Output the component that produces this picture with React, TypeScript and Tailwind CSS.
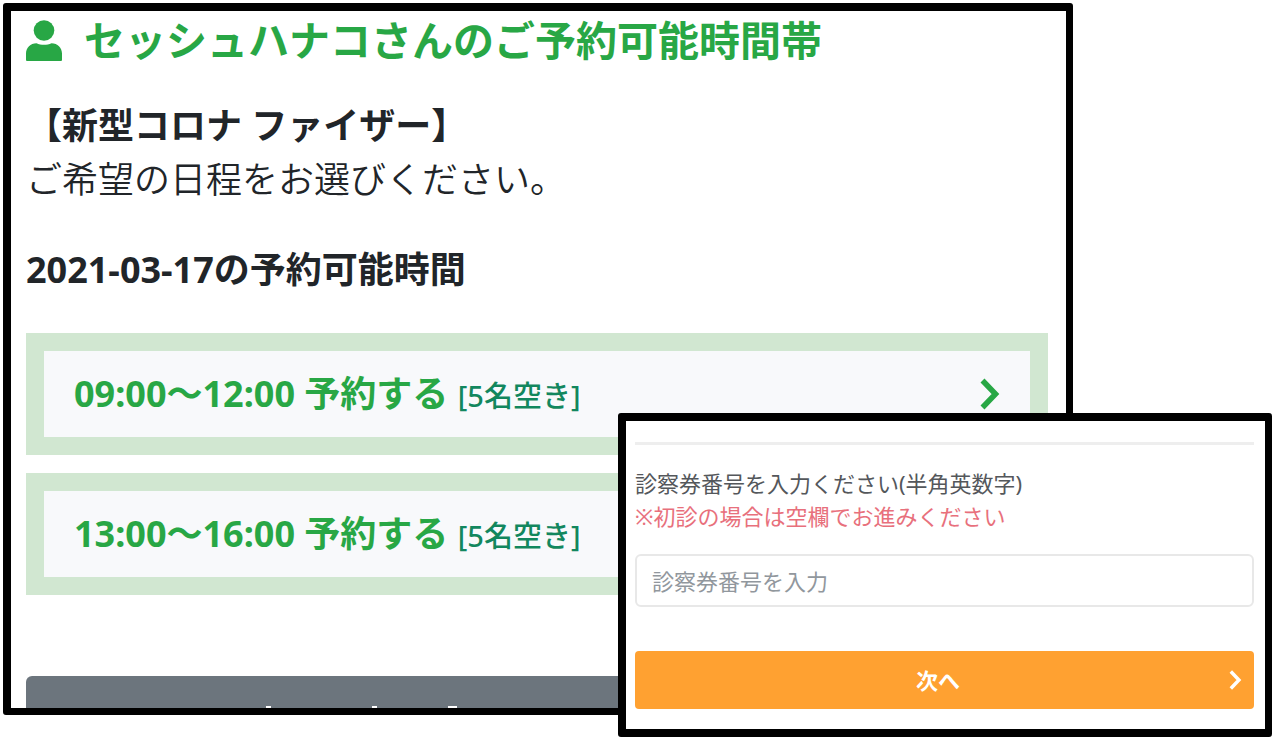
import { useState } from "react";

const slots = [
    { time: "09:00〜12:00", vacancy: 5 },
    { time: "13:00〜16:00", vacancy: 5 },
];

function UserIcon({ className }: { className: string }) {
    return (
        <svg className={className} viewBox="0 0 36 41" fill="currentColor" aria-hidden="true">
            <circle cx="18" cy="10.5" r="10.3" />
            <path d="M10.5 23.2C15 25.2 21 25.2 25.5 23.2C31.5 23.2 36 27.5 36 33.5V40Q36 41 35 41H1Q0 41 0 40V33.5C0 27.5 4.500 23.2 10.500 23.2Z" />
        </svg>
    );
}

function ChevronIcon({ className }: { className: string }) {
    return (
        <svg className={className} viewBox="0 0 20 32" fill="none" stroke="currentColor" strokeWidth="5.500" aria-hidden="true">
            <path d="M2.500 2.500L15.500 16L2.500 29.500" />
        </svg>
    );
}

function SlotButton({ time, vacancy }: { time: string; vacancy: number }) {
    return (
        <button
            type="button"
            className="flex w-full items-center justify-between border-[18px] border-[#d1e7d1] bg-[#f8f9fb] py-4 pr-[30px] pl-[30px] text-left"
        >
            <span className="text-4xl leading-[54px] font-bold text-[#28a745]">
                {time} 予約する{" "}
                <span className="text-[29px] leading-none font-medium text-[#12875e]">[{vacancy}名空き]</span>
            </span>
            <ChevronIcon className="h-8 w-5 flex-none text-[#28a745]" />
        </button>
    );
}

function Schedule() {
    return (
        <main className="mt-[3px] mr-[201px] ml-[3px] rounded-[3px] border-8 border-r-7 border-b-7 border-black bg-white pr-[18px] pl-[15px]">
            <h1 className="flex items-center gap-[22px] text-[41px] leading-[58px] font-bold whitespace-nowrap text-[#28a745]">
                <UserIcon className="h-[41px] w-9 flex-none" />
                セッシュハナコさんのご予約可能時間帯
            </h1>
            <div className="mt-[30px] text-4xl leading-[54px] text-[#212529]">
                <p className="font-bold">【新型コロナ ファイザー】</p>
                <p className="font-[350]">ご希望の日程をお選びください。</p>
            </div>
            <h2 className="mt-9 text-4xl leading-[54px] font-bold text-[#212529]">2021-03-17の予約可能時間</h2>
            <div className="mt-9 flex flex-col gap-[18px]">
                {slots.map((slot) => (
                    <SlotButton key={slot.time} {...slot} />
                ))}
            </div>
            {/* Only the top edge of the back button is visible */}
            <button
                type="button"
                aria-label="戻る"
                className="mt-[81px] flex h-8 w-full items-end overflow-hidden rounded-t-md bg-[#6c757d]"
            >
                <svg className="h-[2px] w-[440px]" viewBox="0 0 440 2" fill="#fff">
                    <rect x="240" width="5" height="2" />
                    <rect x="346" width="5" height="2" />
                    <rect x="422" width="9" height="2" />
                </svg>
            </button>
        </main>
    );
}

function CardNumberForm() {
    const [cardNumber, setCardNumber] = useState("");

    return (
        <form
            onSubmit={(e) => e.preventDefault()}
            className="absolute top-[413px] right-[2px] left-[618px] rounded-[3px] border-8 border-r-7 border-black bg-white pt-[21px] pr-[11px] pb-5 pl-[9px] text-[22px] leading-[33px]"
        >
            <hr className="border-t-[3px] border-[#eeeeee]" />
            <label htmlFor="card-number" className="mt-[22px] block whitespace-nowrap text-[#54575b]">
                診察券番号を入力ください(半角英数字)
            </label>
            <p className="whitespace-nowrap text-[#e8707c]">※初診の場合は空欄でお進みください</p>
            <input
                id="card-number"
                type="text"
                value={cardNumber}
                onChange={(e) => setCardNumber(e.target.value)}
                placeholder="診察券番号を入力"
                className="mt-[21px] block h-[53px] w-full rounded-md border-2 border-[#e8e8e8] bg-white px-[15px] text-[#54575b] outline-none placeholder:text-[#91979d]"
            />
            <button
                type="submit"
                className="mt-11 flex h-[58px] w-full items-center rounded-sm bg-[#ffa131] pr-3 pl-3 font-bold text-white"
            >
                <span className="flex-1 text-center">次へ</span>
                <ChevronIcon className="h-5 w-[13px] flex-none" />
            </button>
        </form>
    );
}

export default function App() {
    return (
        <div className="relative flow-root min-h-[742px] bg-white font-['Noto_Sans','Noto_Sans_CJK_JP',sans-serif]">
            <Schedule />
            <CardNumberForm />
        </div>
    );
}
